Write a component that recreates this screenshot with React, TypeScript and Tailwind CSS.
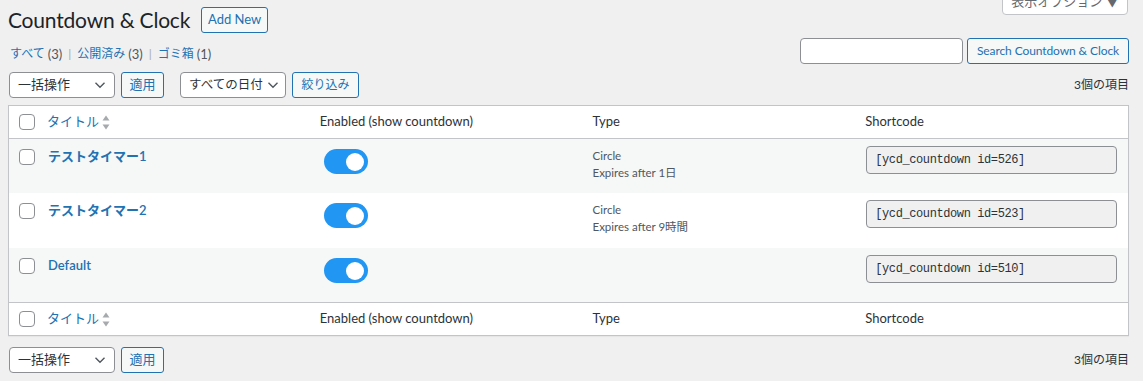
import React from "react";

const Checkbox = () => (
  <span className="block w-4 h-4 border border-[#8c8f94] rounded-[4px] bg-white" />
);

const Chevron = () => (
  <svg width="12" height="8" viewBox="0 0 12 8" className="shrink-0">
    <path d="M1.5 1.8 L6 6.2 L10.5 1.8" fill="none" stroke="#50575e" strokeWidth="1.4" />
  </svg>
);

const SortIcon = () => (
  <svg width="8" height="15" viewBox="0 0 8 15" className="ml-[3px]">
    <path d="M4 0.5 L7.5 5.5 L0.5 5.5 Z" fill="#a7aaad" />
    <path d="M4 14.5 L7.5 9.5 L0.5 9.5 Z" fill="#a7aaad" />
  </svg>
);

const Toggle = () => (
  <span className="flex items-center justify-end w-[44px] h-[25px] rounded-full bg-[#2196f3] pr-[4px]">
    <span className="block w-[18px] h-[18px] rounded-full bg-white" />
  </span>
);

const Select = ({ label, w, gapCls, tcls }: { label: string; w: string; gapCls: string; tcls: string }) => (
  <div
    className={`flex items-center justify-between h-[26px] ${w} border border-[#8c8f94] rounded-[4px] bg-white ${gapCls} text-[#2c3338] whitespace-nowrap`}
  >
    <span className={tcls}>{label}</span>
    <Chevron />
  </div>
);

const Btn = ({ label, cls }: { label: string; cls: string }) => (
  <div
    className={`flex items-center justify-center h-[26px] border border-[#2271b1] rounded-[3px] bg-[#f6f7f7] text-[#2271b1] whitespace-nowrap ${cls}`}
  >
    {label}
  </div>
);

const rows = [
  { title: "テストタイマー1", type: ["Circle", "Expires after 1日"], id: 526, bg: "bg-[#f6f7f7]", h: "h-[54px]" },
  { title: "テストタイマー2", type: ["Circle", "Expires after 9時間"], id: 523, bg: "bg-white", h: "h-[55px]" },
  { title: "Default", type: [] as string[], id: 510, bg: "bg-[#f6f7f7]", h: "h-[54px]" },
];

const HeadRow = ({ cls }: { cls: string }) => (
  <div className={`grid grid-cols-[28px_1fr_1fr_1fr_1fr] items-center bg-white text-[13px] text-[#2c3338] ${cls}`}>
    <div className="pl-[10px]">
      <Checkbox />
    </div>
    <div className="pl-[10px] flex items-center text-[#2271b1]">
      <span className="text-[13px]">タイトル</span>
      <SortIcon />
    </div>
    <div className="pl-[10px]">Enabled (show countdown)</div>
    <div className="pl-[10px]">Type</div>
    <div className="pl-[10px]">Shortcode</div>
  </div>
);

export default function App() {
  return (
    <div className="relative min-h-screen bg-[#f0f0f1] pl-[8px] pr-[14px] font-[Lato,'Noto_Sans_CJK_JP',sans-serif] text-[#2c3338] overflow-hidden">
      <div className="absolute right-[15px] top-[-11px] h-[26px] w-[126px] flex items-center justify-center border border-[#c3c4c7] rounded-b-[4px] bg-white text-[13px] text-[#646970]">
        表示オプション ▼
      </div>

      <div className="flex items-center pt-[7px]">
        <h1 className="text-[21px] leading-[26px] tracking-[-0.2px] text-[#1d2327] font-normal">Countdown &amp; Clock</h1>
        <Btn label="Add New" cls="ml-[11px] w-[67px] text-[13px]" />
      </div>

      <div className="flex justify-between items-start mt-[5px]">
        <div className="pt-[7px] leading-[18px] text-[12px] pl-[2px] flex items-center">
          <span className="text-[#2271b1]">すべて</span>
          <span className="text-[#50575e] ml-[3px] text-[13px]">(3)</span>
          <span className="text-[#a7aaad] mx-[6px]">|</span>
          <span className="text-[#2271b1]">公開済み</span>
          <span className="text-[#50575e] ml-[3px] text-[13px]">(3)</span>
          <span className="text-[#a7aaad] mx-[6px]">|</span>
          <span className="text-[#2271b1]">ゴミ箱</span>
          <span className="text-[#50575e] ml-[3px] text-[13px]">(1)</span>
        </div>
        <div className="flex items-center gap-[4px]">
          <div className="w-[163px] h-[26px] border border-[#8c8f94] rounded-[4px] bg-white" />
          <Btn label="Search Countdown & Clock" cls="w-[162px] text-[12px] tracking-[-0.1px]" />
        </div>
      </div>

      <div className="flex items-center mt-[8px] h-[26px]">
        <div className="ml-px">
          <Select label="一括操作" w="w-[106px]" gapCls="pl-[8px] pr-[8px]" tcls="text-[13px]" />
        </div>
        <Btn label="適用" cls="ml-[6px] w-[43px] text-[13px]" />
        <div className="ml-[16px]">
          <Select label="すべての日付" w="w-[106px]" gapCls="pl-[8px] pr-[6px]" tcls="text-[12.5px]" />
        </div>
        <Btn label="絞り込み" cls="ml-[6px] w-[67px] text-[12px]" />
        <div className="ml-auto text-[12px] text-[#2c3338]">3個の項目</div>
      </div>

      <div className="mt-[7px] border border-[#c3c4c7] bg-white shadow-[0_1px_1px_rgba(0,0,0,0.04)]">
        <HeadRow cls="h-[33px] border-b border-[#c3c4c7]" />
        {rows.map((r) => (
          <div key={r.id} className={`grid grid-cols-[28px_1fr_1fr_1fr_1fr] items-start ${r.bg} ${r.h}`}>
            <div className="pl-[10px] pt-[10px]">
              <Checkbox />
            </div>
            <div className="pl-[11px] pt-[8px] leading-[18px] text-[13px] font-semibold text-[#2271b1]">{r.title}</div>
            <div className="pl-[14px] pt-[10px]">
              <Toggle />
            </div>
            <div className="pl-[10px] pt-[8px] text-[11.5px] leading-[17px] text-[#50575e]">
              {r.type.map((t) => (
                <div key={t}>{t}</div>
              ))}
            </div>
            <div className="pl-[11px] pt-[7px] pr-[11px]">
              <div className="flex items-center h-[28px] border border-[#8c8f94] rounded-[4px] bg-[#f0f0f1] pl-[8px] font-['Liberation_Mono',monospace] text-[12px] tracking-[-0.4px] text-[#2c3338]">
                [ycd_countdown id={r.id}]
              </div>
            </div>
          </div>
        ))}
        <HeadRow cls="h-[33px] border-t border-[#c3c4c7]" />
      </div>

      <div className="flex items-center mt-[11px] h-[26px]">
        <div className="ml-px">
          <Select label="一括操作" w="w-[106px]" gapCls="pl-[8px] pr-[8px]" tcls="text-[13px]" />
        </div>
        <Btn label="適用" cls="ml-[6px] w-[43px] text-[13px]" />
        <div className="ml-auto text-[12px] text-[#2c3338]">3個の項目</div>
      </div>
    </div>
  );
}
